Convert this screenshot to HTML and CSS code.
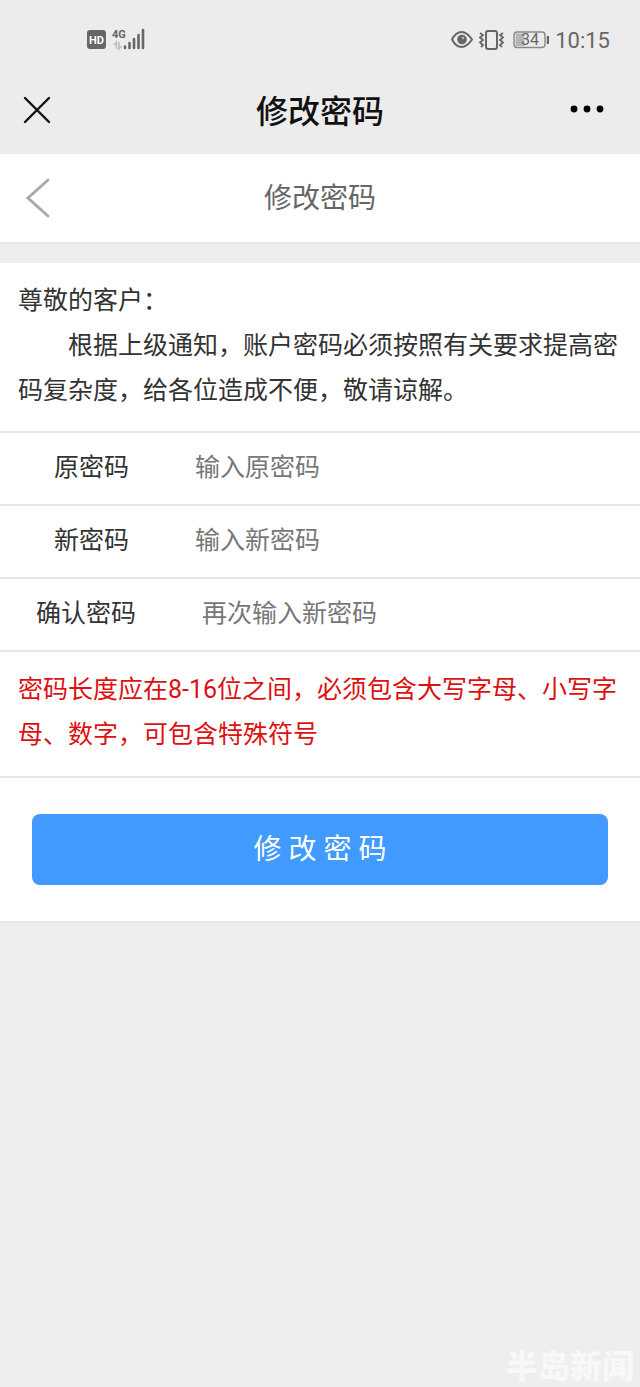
FILE: index.html
```html
<!DOCTYPE html>
<html lang="zh-CN">
<head>
    <meta charset="UTF-8">
    <meta name="viewport" content="width=device-width, initial-scale=1.0">
    <title>修改密码</title>
    <link rel="stylesheet" href="styles.css">
</head>
<body>
    <div class="status-bar">
        <div class="status-left">
            <svg width="60" height="24" viewBox="0 0 60 24">
                <rect x="1" y="2" width="19" height="19" rx="3" fill="#666"/>
                <text class="hd" x="3" y="16">HD</text>
                <text class="net" x="26" y="10">4G</text>
                <path d="M30.500 21v-7l-2.500 3M33 14v7l2.500-3" stroke="#bbb" stroke-width="1.500" fill="none"/>
                <path d="M39 18.500v1.500M43.500 15v5M48 11v9M52.500 7v13M57 2v18" stroke="#666" stroke-width="2.600" stroke-linecap="round"/>
            </svg>
        </div>
        <div class="status-right">
            <svg width="100" height="24" viewBox="0 0 100 24" fill="none" stroke="#666">
                <path d="M3 11.500Q7 4 12.500 4T23 11.500Q18 19 12.500 19T3 11.500Z" stroke-width="2"/>
                <circle cx="13" cy="11.500" r="4.800" fill="#666" stroke="none"/>
                <circle cx="14" cy="10" r="1.200" fill="#bbb" stroke="none"/>
                <rect x="37" y="3" width="11" height="18" rx="2" stroke-width="2"/>
                <path d="M31 5l3 2-3 2.500 3 2.500-3 2.500 3 2.500-2 2M54 5l-3 2 3 2.500-3 2.500 3 2.500-3 2.500 2 2" stroke-width="1.800"/>
                <rect x="65" y="4" width="31" height="15.500" rx="3" stroke="#888" stroke-width="1.400"/>
                <rect x="66.500" y="5.500" width="9" height="12.500" fill="#b5b5b5" stroke="none"/>
                <path d="M99 8v8" stroke-width="2.400"/>
                <text class="battery" x="72" y="17">34</text>
            </svg>
            <span class="time">10:15</span>
        </div>
    </div>

    <header class="app-bar">
        <button class="icon-button" type="button" aria-label="关闭">
            <svg width="28" height="28" viewBox="0 0 28 28"><path d="M2 2l24 24M26 2L2 26" stroke="#111" stroke-width="2.400" stroke-linecap="round"/></svg>
        </button>
        <h1>修改密码</h1>
        <button class="icon-button more" type="button" aria-label="更多">
            <svg width="34" height="28" viewBox="0 0 34 28" fill="#000"><circle cx="4" cy="13" r="3.400"/><circle cx="17" cy="13" r="3.400"/><circle cx="30" cy="13" r="3.400"/></svg>
        </button>
    </header>

    <nav class="nav-bar">
        <a class="back" href="#" aria-label="返回">
            <svg width="26" height="42" viewBox="0 0 26 42"><path d="M23 3L3 21l20 18" fill="none" stroke="#aaa" stroke-width="3" stroke-linecap="round"/></svg>
        </a>
        <h2>修改密码</h2>
    </nav>

    <form class="panel">
        <div class="notice">
            <p>尊敬的客户：</p>
            <p class="indent">根据上级通知，账户密码必须按照有关要求提高密码复杂度，给各位造成不便，敬请谅解。</p>
        </div>
        <div class="field">
            <label for="old">原密码</label>
            <input id="old" type="password" placeholder="输入原密码">
        </div>
        <div class="field">
            <label for="new">新密码</label>
            <input id="new" type="password" placeholder="输入新密码">
        </div>
        <div class="field field-long">
            <label for="confirm">确认密码</label>
            <input id="confirm" type="password" placeholder="再次输入新密码">
        </div>
        <div class="notice rule">
            <p>密码长度应在8-16位之间，必须包含大写字母、小写字母、数字，可包含特殊符号</p>
        </div>
        <div class="actions">
            <button class="submit" type="button">修 改 密 码</button>
        </div>
    </form>

    <div class="watermark">半岛新闻</div>
</body>
</html>
```
FILE: styles.css
```css
* {
    box-sizing: border-box;
}

body {
    font-family: Roboto, 'Noto Sans CJK SC', sans-serif;
    margin: 0;
    min-height: 100vh;
    position: relative;
    background-color: #eeeeee;
    color: #333333;
    font-size: 25px;
}

h1, h2, p {
    margin: 0;
}

svg {
    display: block;
}

.status-bar {
    display: flex;
    justify-content: space-between;
    align-items: center;
    height: 66px;
    padding: 14px 30px 0 86px;
    background-color: #ececec;
}

.status-right {
    display: flex;
    align-items: center;
    gap: 6px;
}

.time {
    padding-top: 2px;
    font-size: 22px;
    line-height: 24px;
    color: #666666;
}

.hd {
    font-size: 11px;
    font-weight: 700;
    fill: #ffffff;
}

.net {
    font-size: 11px;
    font-weight: 700;
    fill: #666666;
}

.battery {
    font-size: 16px;
    fill: #666666;
    stroke: none;
}

.app-bar {
    display: grid;
    grid-template-columns: 1fr auto 1fr;
    align-items: center;
    height: 88px;
    padding: 0 23px;
    background-color: #ececec;
}

.app-bar h1 {
    padding-top: 4px;
    font-size: 32px;
    font-weight: 500;
    line-height: 48px;
    color: #111111;
}

.icon-button {
    padding: 0;
    border: none;
    background: none;
    cursor: pointer;
    justify-self: start;
}

.more {
    padding-right: 13px;
    justify-self: end;
}

.nav-bar {
    display: flex;
    justify-content: center;
    align-items: center;
    position: relative;
    height: 90px;
    background-color: #ffffff;
    border-bottom: 2px solid #e6e6e6;
}

.nav-bar h2 {
    padding-bottom: 4px;
    font-size: 28px;
    font-weight: 400;
    color: #666666;
}

.back {
    position: absolute;
    left: 25px;
}

.panel {
    margin-top: 19px;
    background-color: #ffffff;
    border-bottom: 2px solid #e6e6e6;
}

.notice {
    padding: 15px 18px 18px;
    line-height: 45px;
    border-bottom: 2px solid #e6e6e6;
}

.indent {
    text-indent: 2em;
}

.rule {
    padding-bottom: 19px;
    color: #dd1111;
}

.field {
    display: flex;
    align-items: baseline;
    gap: 66px;
    height: 73px;
    padding: 12px 18px 0 54px;
    line-height: 45px;
    border-bottom: 2px solid #e6e6e6;
}

.field-long {
    padding-left: 36px;
}

.field input {
    flex: 1;
    min-width: 0;
    padding: 0;
    border: none;
    outline: none;
    background: none;
    font: inherit;
}

.field input::placeholder {
    color: #777777;
}

.actions {
    padding: 36px 32px;
}

.submit {
    display: block;
    width: 100%;
    height: 71px;
    padding: 0 0 6px;
    border: none;
    border-radius: 8px;
    background-color: #409aff;
    color: #ffffff;
    font-family: inherit;
    font-size: 28px;
    cursor: pointer;
}

.watermark {
    position: absolute;
    right: 6px;
    bottom: 0;
    font-size: 32px;
    font-weight: 900;
    line-height: 40px;
    color: #f8f8f8;
}
```
